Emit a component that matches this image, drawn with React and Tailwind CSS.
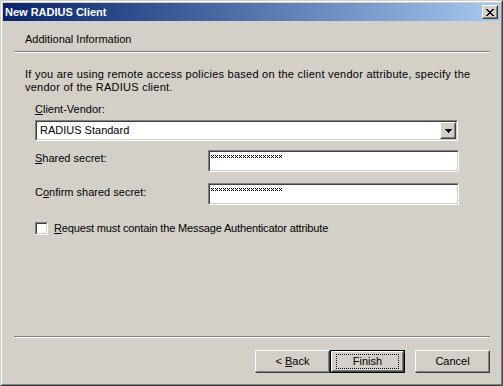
import React from "react";

const font = { fontFamily: '"Liberation Sans", Arial, sans-serif' };

function Sunken({ className = "", children }) {
    return (
        <div className={"border border-t-[#808080] border-l-[#808080] border-r-white border-b-white " + className}>
            <div className="h-full w-full border border-t-[#404040] border-l-[#404040] border-r-[#d4d0c8] border-b-[#d4d0c8] bg-white">
                {children}
            </div>
        </div>
    );
}

function Raised({ className = "", children }) {
    return (
        <div className={"border border-t-white border-l-white border-r-[#404040] border-b-[#404040] bg-[#d4d0c8] " + className}>
            <div className="flex h-full w-full items-center justify-center border border-t-[#d4d0c8] border-l-[#d4d0c8] border-r-[#808080] border-b-[#808080]">
                {children}
            </div>
        </div>
    );
}

// password mask: 18 little pixel crosses
function Masked() {
    const marks = Array.from({ length: 18 }, (_, i) => i * 4);
    return (
        <div className="pl-px pt-[3px]">
            <svg width="72" height="3" viewBox="0 0 72 3" shapeRendering="crispEdges">
                {marks.map((x) => (
                    <path key={x} d={`M${x} 0h1v1h-1zM${x + 2} 0h1v1h-1zM${x + 1} 1h1v1h-1zM${x} 2h1v1h-1zM${x + 2} 2h1v1h-1z`} fill="#000" />
                ))}
            </svg>
        </div>
    );
}

export default function App() {
    return (
        <div
            style={font}
            className="h-[386px] w-[503px] border border-t-[#d4d0c8] border-l-[#d4d0c8] border-r-[#404040] border-b-[#404040] bg-[#d4d0c8] text-[11px] leading-[13px] text-black"
        >
            <div className="flex h-full flex-col border border-t-white border-l-white border-r-[#808080] border-b-[#808080] p-px">
                {/* title bar */}
                <div className="flex h-[18px] items-center bg-gradient-to-r from-[#0a246a] to-[#a6caf0] pl-[2px] pr-[2px]">
                    <span className="flex-1 text-[11px] font-bold text-white">New RADIUS Client</span>
                    <Raised className="h-[14px] w-[16px]">
                        <svg width="8" height="7" viewBox="0 0 8 7" shapeRendering="crispEdges">
                            <path d="M0 0h2v1h1v1h2V1h1V0h2v1H7v1H6v1H5v1h1v1h1v1h1v1H6V6H5V5H3v1H2v1H0V6h1V5h1V4h1V3H2V2H1V1H0z" fill="#000" />
                        </svg>
                    </Raised>
                </div>

                {/* header */}
                <div className="h-[30px] pl-[22px] pt-[12px]">Additional Information</div>
                <div className="ml-[11px] mr-[10px] h-0 border-t border-b border-t-[#808080] border-b-white" />

                {/* body */}
                <div className="mt-[15px] whitespace-nowrap pl-[22px] tracking-[0.25px]">
                    If you are using remote access policies based on the client vendor attribute, specify the
                    <br />
                    vendor of the RADIUS client.
                </div>

                <div className="mt-[9px] pl-[32px]">
                    <u>C</u>lient-Vendor:
                </div>
                <div className="mt-[4px] pl-[32px]">
                    <Sunken className="h-[21px] w-[423px]">
                        <div className="flex h-full items-center">
                            <span className="flex-1 pl-[3px]">RADIUS Standard</span>
                            <Raised className="h-[17px] w-[16px]">
                                <svg width="7" height="4" viewBox="0 0 7 4" shapeRendering="crispEdges">
                                    <path d="M0 0h7v1H6v1H5v1H4v1H3V3H2V2H1V1H0z" fill="#000" />
                                </svg>
                            </Raised>
                        </div>
                    </Sunken>
                </div>

                <div className="mt-[9px] flex items-start pl-[32px]">
                    <span className="w-[173px] pt-[2px]">
                        <u>S</u>hared secret:
                    </span>
                    <Sunken className="h-[22px] w-[251px]">
                        <Masked />
                    </Sunken>
                </div>

                <div className="mt-[11px] flex items-start pl-[32px]">
                    <span className="w-[173px] pt-[3px]">
                        C<u>o</u>nfirm shared secret:
                    </span>
                    <Sunken className="h-[22px] w-[251px]">
                        <Masked />
                    </Sunken>
                </div>

                <div className="mt-[17px] flex items-center pl-[32px]">
                    <Sunken className="h-[13px] w-[13px]" />
                    <span className="ml-[6px] tracking-[-0.15px]">
                        <u>R</u>equest must contain the Message Authenticator attribute
                    </span>
                </div>

                <div className="flex-1" />

                {/* footer */}
                <div className="ml-[11px] mr-[10px] h-0 border-t border-b border-t-[#808080] border-b-white" />
                <div className="mb-[10px] mt-[12px] flex justify-end pr-[10px]">
                    <Raised className="h-[23px] w-[75px]">
                        <span>
                            &lt; <u>B</u>ack
                        </span>
                    </Raised>
                    <div className="h-[23px] w-[75px] border border-black">
                        <Raised className="h-full w-full">
                            <div className="flex h-[15px] w-[63px] items-center justify-center border border-dotted border-black">
                                Finish
                            </div>
                        </Raised>
                    </div>
                    <Raised className="ml-[10px] h-[23px] w-[75px]">
                        <span>Cancel</span>
                    </Raised>
                </div>
            </div>
        </div>
    );
}
